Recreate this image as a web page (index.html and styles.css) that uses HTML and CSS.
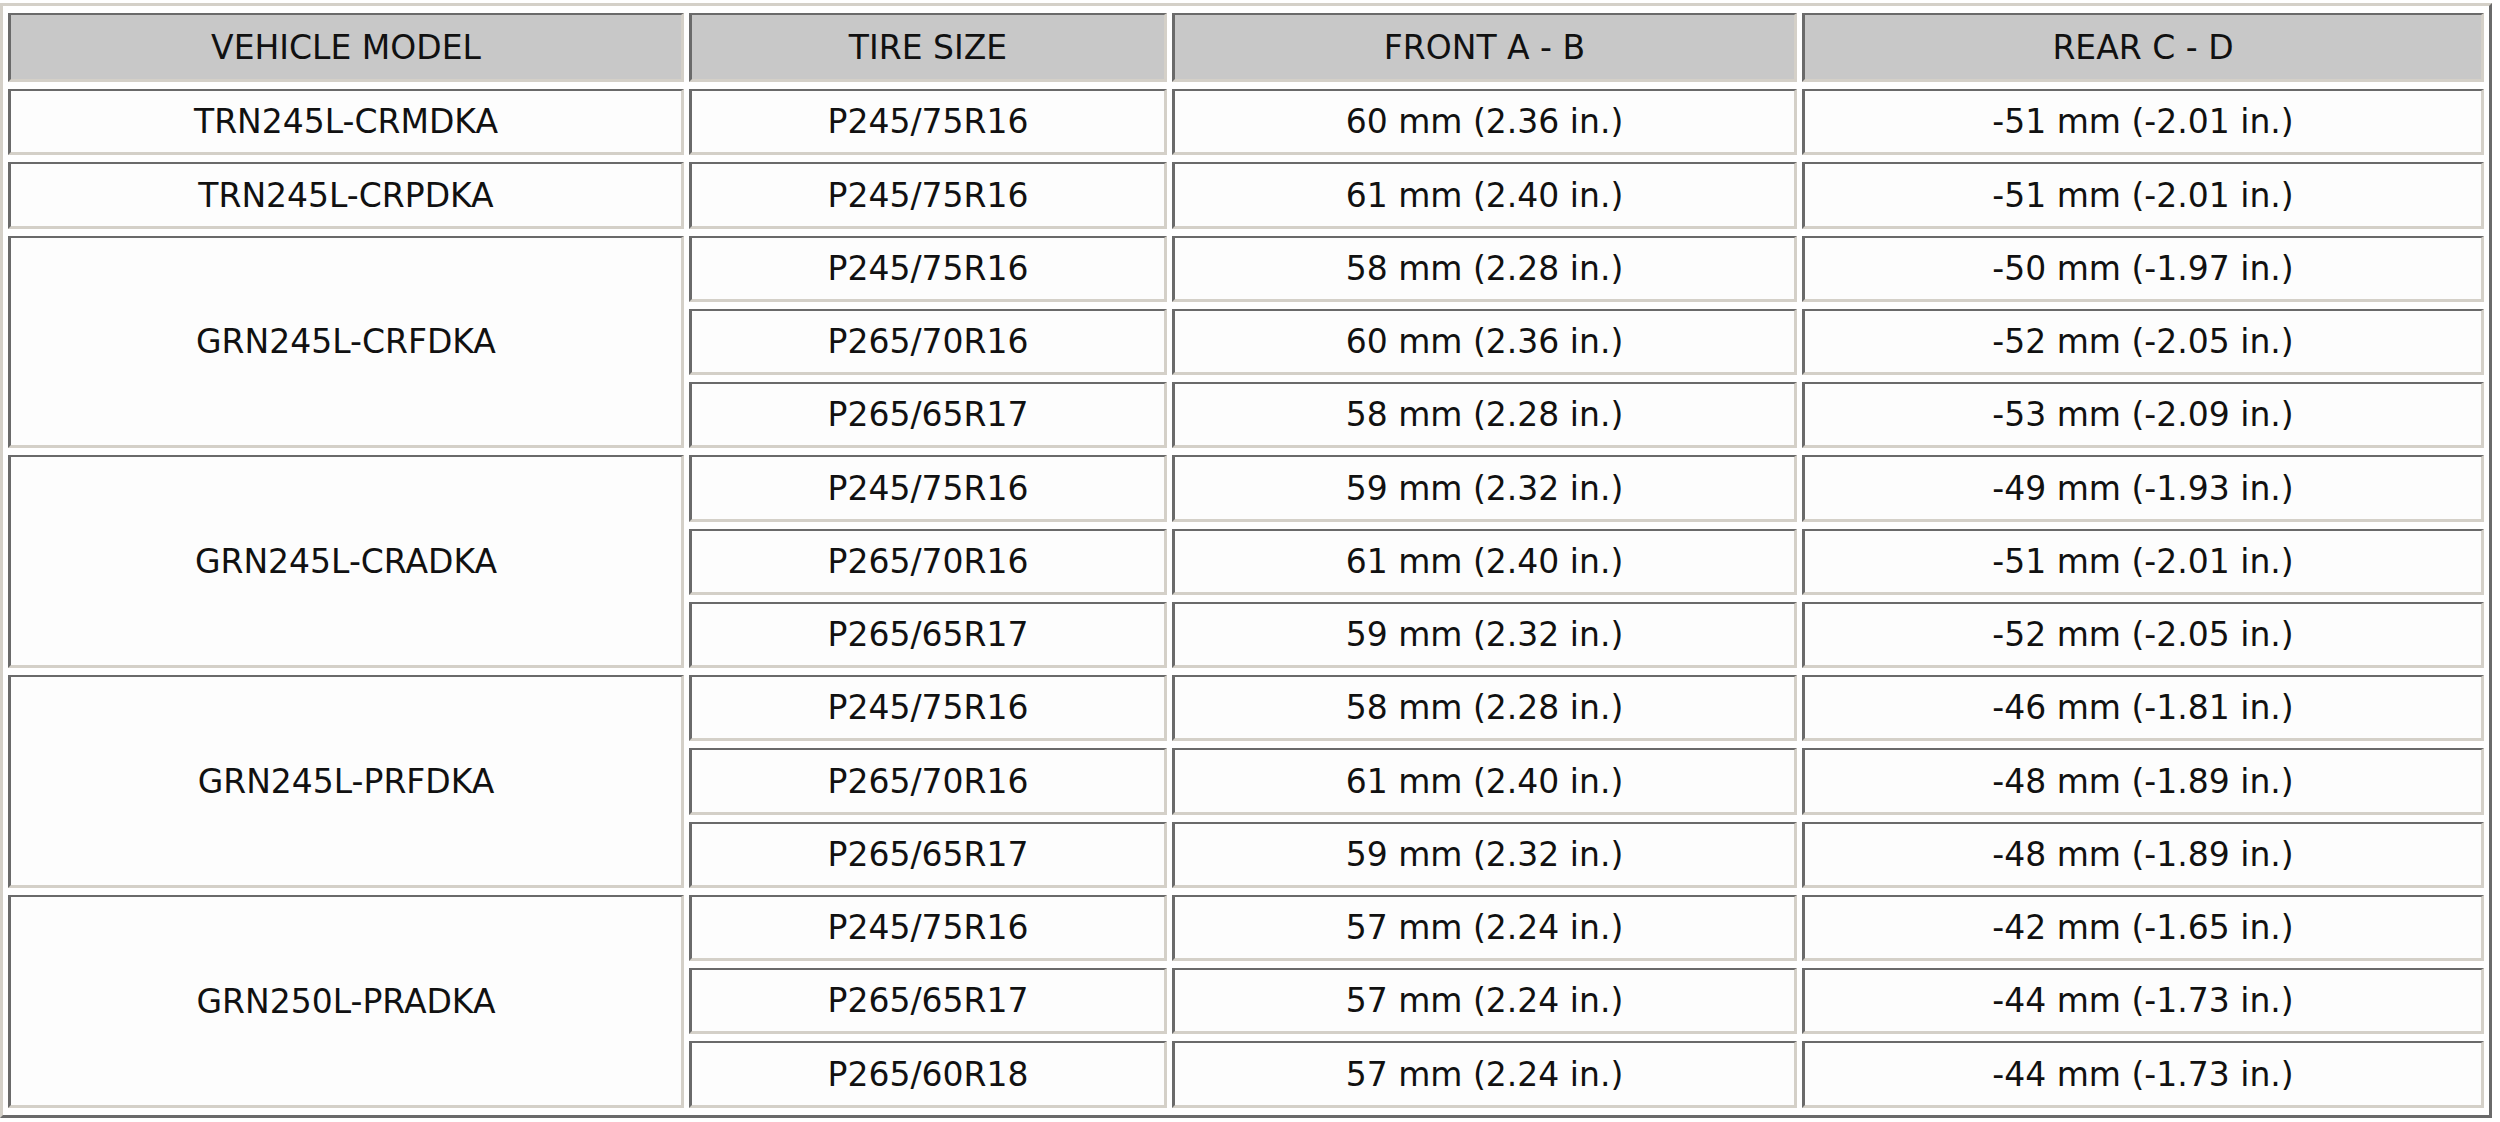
FILE: index.html
```html
<!DOCTYPE html>
<html lang="en">
<head>
<meta charset="utf-8">
<title>Tire size specifications</title>
<link rel="stylesheet" href="styles.css">
</head>
<body>
<table class="spec">
  <colgroup>
    <col class="c-model">
    <col class="c-tire">
    <col class="c-front">
    <col class="c-rear">
  </colgroup>
  <thead>
    <tr class="head">
      <th>VEHICLE MODEL</th>
      <th>TIRE SIZE</th>
      <th>FRONT A - B</th>
      <th>REAR C - D</th>
    </tr>
  </thead>
  <tbody>
    <tr><td>TRN245L-CRMDKA</td><td>P245/75R16</td><td>60 mm (2.36 in.)</td><td>-51 mm (-2.01 in.)</td></tr>
    <tr><td>TRN245L-CRPDKA</td><td>P245/75R16</td><td>61 mm (2.40 in.)</td><td>-51 mm (-2.01 in.)</td></tr>
    <tr><td rowspan="3">GRN245L-CRFDKA</td><td>P245/75R16</td><td>58 mm (2.28 in.)</td><td>-50 mm (-1.97 in.)</td></tr>
    <tr><td>P265/70R16</td><td>60 mm (2.36 in.)</td><td>-52 mm (-2.05 in.)</td></tr>
    <tr><td>P265/65R17</td><td>58 mm (2.28 in.)</td><td>-53 mm (-2.09 in.)</td></tr>
    <tr><td rowspan="3">GRN245L-CRADKA</td><td>P245/75R16</td><td>59 mm (2.32 in.)</td><td>-49 mm (-1.93 in.)</td></tr>
    <tr><td>P265/70R16</td><td>61 mm (2.40 in.)</td><td>-51 mm (-2.01 in.)</td></tr>
    <tr><td>P265/65R17</td><td>59 mm (2.32 in.)</td><td>-52 mm (-2.05 in.)</td></tr>
    <tr><td rowspan="3">GRN245L-PRFDKA</td><td>P245/75R16</td><td>58 mm (2.28 in.)</td><td>-46 mm (-1.81 in.)</td></tr>
    <tr><td>P265/70R16</td><td>61 mm (2.40 in.)</td><td>-48 mm (-1.89 in.)</td></tr>
    <tr><td>P265/65R17</td><td>59 mm (2.32 in.)</td><td>-48 mm (-1.89 in.)</td></tr>
    <tr><td rowspan="3">GRN250L-PRADKA</td><td>P245/75R16</td><td>57 mm (2.24 in.)</td><td>-42 mm (-1.65 in.)</td></tr>
    <tr><td>P265/65R17</td><td>57 mm (2.24 in.)</td><td>-44 mm (-1.73 in.)</td></tr>
    <tr><td>P265/60R18</td><td>57 mm (2.24 in.)</td><td>-44 mm (-1.73 in.)</td></tr>
  </tbody>
</table>
</body>
</html>
```

FILE: styles.css
```css
html, body {
  margin: 0;
  padding: 0;
  background: #ffffff;
}

body {
  padding-top: 3px;
  font-family: "DejaVu Sans", Verdana, sans-serif;
  color: #111111;
}

.spec {
  width: 2492px;
  table-layout: fixed;
  border-collapse: separate;
  border-spacing: 5px 7px;
  border-style: solid;
  border-width: 3px;
  border-color: #d4d0c8 #6a6a6a #6a6a6a #d4d0c8;
  background: #ffffff;
}

.c-model { width: 676px; }
.c-tire { width: 478px; }
.c-front { width: 625px; }
.c-rear { width: 682px; }

.spec th,
.spec td {
  padding: 0;
  text-align: center;
  vertical-align: middle;
  border-style: solid;
  border-width: 2px 3px 3px 3px;
  border-color: #6a6a6a #d4d0c8 #d4d0c8 #6a6a6a;
  font-size: 33px;
  font-weight: normal;
  white-space: nowrap;
}

.spec .head { height: 69px; }
.spec tbody tr { height: 66px; }
.spec tbody tr:nth-child(4n+2) { height: 67px; }

.spec th {
  background: #c8c8c8;
}

.spec td {
  background: #fdfdfd;
}
```
